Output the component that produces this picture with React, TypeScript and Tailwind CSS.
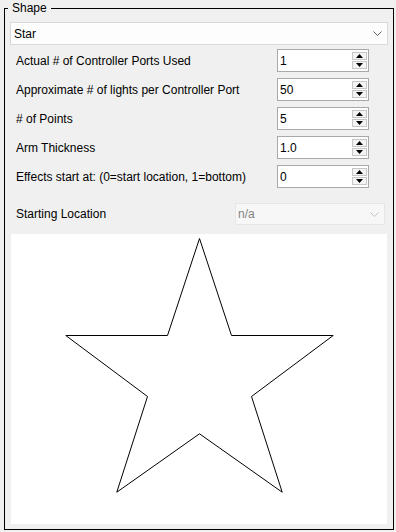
import React from "react";

const rows = [
  { label: "Actual # of Controller Ports Used", value: "1" },
  { label: "Approximate # of lights per Controller Port", value: "50" },
  { label: "# of Points", value: "5" },
  { label: "Arm Thickness", value: "1.0" },
  { label: "Effects start at: (0=start location, 1=bottom)", value: "0" },
];

function Chevron({ color }: { color: string }) {
  return (
    <svg width="9" height="5" viewBox="0 0 9 5" className="block">
      <polyline points="0.5,0.5 4.5,4.5 8.5,0.5" fill="none" stroke={color} strokeWidth="1" />
    </svg>
  );
}

function SpinBox({ value }: { value: string }) {
  return (
    <div className="flex h-[23px] w-[92px] items-center border border-[#a9a9a9] bg-white pl-[2px] pr-[1px]">
      <span className="flex-1 leading-none">{value}</span>
      <div className="flex flex-col gap-[1px]">
        <div className="flex h-[8px] w-[15px] items-center justify-center border border-[#c6c6c6] bg-[#f4f4f4]">
          <svg width="7" height="4" viewBox="0 0 7 4">
            <polygon points="3.5,0 7,4 0,4" fill="#000" />
          </svg>
        </div>
        <div className="flex h-[8px] w-[15px] items-center justify-center border border-[#c6c6c6] bg-[#f4f4f4]">
          <svg width="7" height="4" viewBox="0 0 7 4">
            <polygon points="0,0 7,0 3.5,4" fill="#000" />
          </svg>
        </div>
      </div>
    </div>
  );
}

export default function App() {
  const star = [
    [188, 4],
    [220, 101],
    [321.7, 101],
    [240, 162],
    [270.7, 257.7],
    [188, 199.3],
    [105.3, 257.7],
    [136, 162],
    [54.3, 101],
    [156, 101],
  ]
    .map((p) => `${p[0] + 0.5},${p[1] + 0.5}`)
    .join(" ");

  return (
    <div
      className="h-[532px] w-[396px] bg-[#f0f0f0] text-[12px] text-black"
      style={{ fontFamily: '"Liberation Sans", Arial, sans-serif' }}
    >
      <fieldset className="mx-[4px] w-[390px] border border-black px-[5px] pb-[5px]">
        <legend className="-ml-[2px] px-[4px] leading-[16px]">Shape</legend>
        <div className="mt-[6px] flex h-[23px] items-center justify-between border border-[#d9d9d9] bg-[#fdfdfd] pl-[3px] pr-[5px]">
          <span>Star</span>
          <Chevron color="#606060" />
        </div>
        <div className="mt-[4px] flex flex-col gap-[6px]">
          {rows.map((r) => (
            <div key={r.label} className="flex h-[23px] items-center">
              <span className="w-[267px] pl-[6px]">{r.label}</span>
              <SpinBox value={r.value} />
            </div>
          ))}
        </div>
        <div className="mt-[15px] flex h-[22px] items-center">
          <span className="w-[225px] pl-[6px]">Starting Location</span>
          <div className="flex h-[22px] w-[150px] items-center justify-between border border-[#e6e6e6] bg-[#f7f7f7] pl-[2px] pr-[5px] text-[#838383]">
            <span>n/a</span>
            <Chevron color="#c2c2c2" />
          </div>
        </div>
        <div className="mx-[1px] mt-[9px] h-[290px] bg-white">
          <svg width="376" height="290" viewBox="0 0 376 290" className="block">
            <polygon points={star} fill="none" stroke="#000" strokeWidth="1" />
          </svg>
        </div>
      </fieldset>
    </div>
  );
}
